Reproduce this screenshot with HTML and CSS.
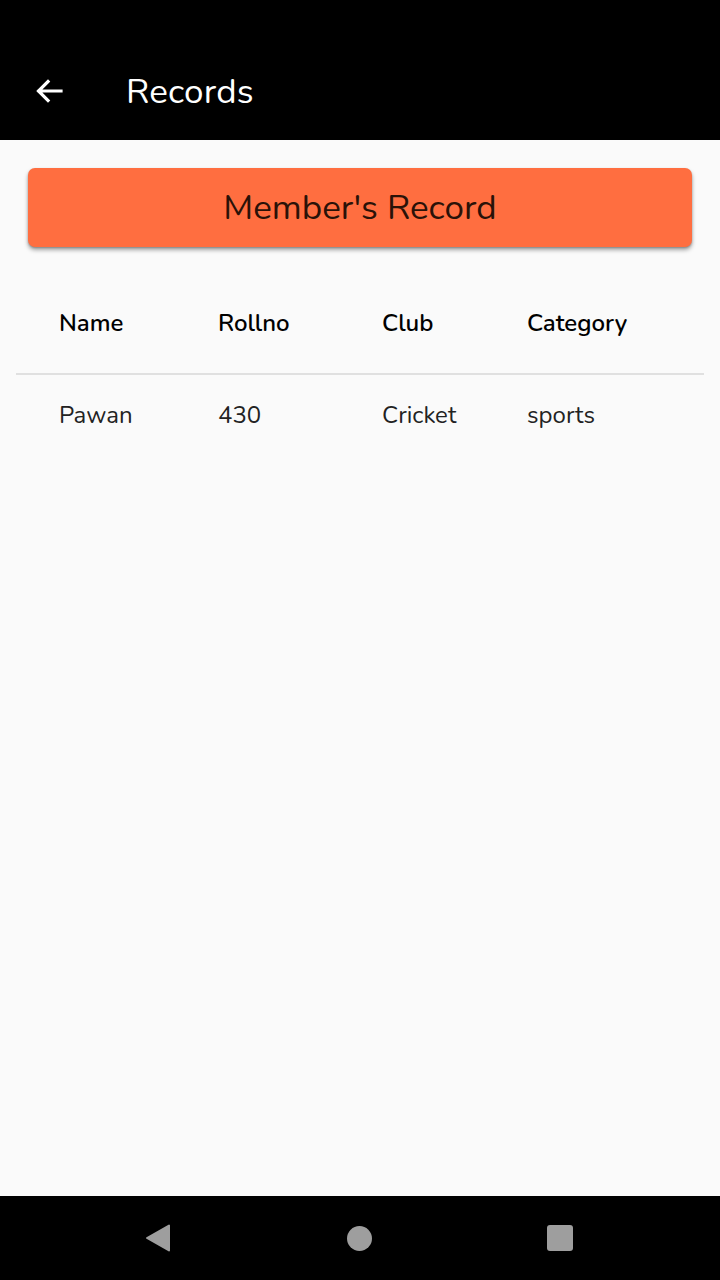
FILE: index.html
```html
<!DOCTYPE html>
<html>
<head>
<meta charset="utf-8">
<link rel="stylesheet" href="styles.css">
</head>
<body>
<div class="screen">
  <div class="statusbar"></div>
  <header class="appbar">
    <svg class="back" width="32" height="32" viewBox="0 0 32 32">
      <path d="M28 16H6M15 6.5L5.5 16L15 25.5" fill="none" stroke="#fff" stroke-width="3.2" stroke-linecap="square"/>
    </svg>
    <h1 class="title">Records</h1>
  </header>
  <main class="content">
    <div class="record-btn">Member's Record</div>
    <div class="table">
      <div class="row head">
        <span>Name</span><span>Rollno</span><span>Club</span><span>Category</span>
      </div>
      <div class="row data">
        <span>Pawan</span><span>430</span><span>Cricket</span><span>sports</span>
      </div>
    </div>
  </main>
  <nav class="navbar">
    <svg width="28" height="30" viewBox="0 0 28 30"><path d="M25 2.5V27.5L3 15Z" fill="#9e9e9e" stroke="#9e9e9e" stroke-width="2" stroke-linejoin="round"/></svg>
    <span class="home"></span>
    <span class="recent"></span>
  </nav>
</div>
</body>
</html>
```
FILE: styles.css
```css
html, body {
  margin: 0;
  padding: 0;
}
body {
  background: #fafafa;
  font-family: "Nunito", "Noto Sans", "Open Sans", sans-serif;
}
.screen {
  width: 720px;
  height: 1280px;
  display: flex;
  flex-direction: column;
  background: #fafafa;
}
.statusbar {
  height: 42px;
  background: #000;
}
.appbar {
  height: 98px;
  background: #000;
  display: flex;
  align-items: center;
  padding-left: 33px;
  box-sizing: border-box;
}
.back {
  display: block;
}
.title {
  margin: 0 0 0 61px;
  color: #fff;
  font-weight: 400;
  font-size: 35px;
  letter-spacing: 0.2px;
}
.content {
  flex: 1;
  display: flex;
  flex-direction: column;
}
.record-btn {
  margin: 28px 28px 0;
  height: 79px;
  background: #ff6e40;
  border-radius: 7px;
  box-shadow: 0 3px 4px rgba(0,0,0,0.35), 0 1px 2px rgba(0,0,0,0.2);
  display: flex;
  align-items: center;
  justify-content: center;
  font-size: 35px;
  color: #2a1208;
}
.table {
  margin: 26px 16px 0;
}
.row {
  display: grid;
  grid-template-columns: 159px 164px 145px 1fr;
  padding-left: 43px;
  align-items: center;
}
.row.head {
  height: 100px;
  border-bottom: 2px solid #e0e0e0;
  font-weight: 600;
  font-size: 24px;
  color: #000;
}
.row.data {
  height: 80px;
  font-size: 24px;
  color: #222;
}
.navbar {
  height: 84px;
  background: #000;
  display: flex;
  align-items: center;
  justify-content: space-between;
  padding: 0 147px 0 144px;
}
.home {
  width: 25px;
  height: 25px;
  border-radius: 50%;
  background: #9e9e9e;
}
.recent {
  width: 26px;
  height: 26px;
  border-radius: 3px;
  background: #9e9e9e;
}
```
